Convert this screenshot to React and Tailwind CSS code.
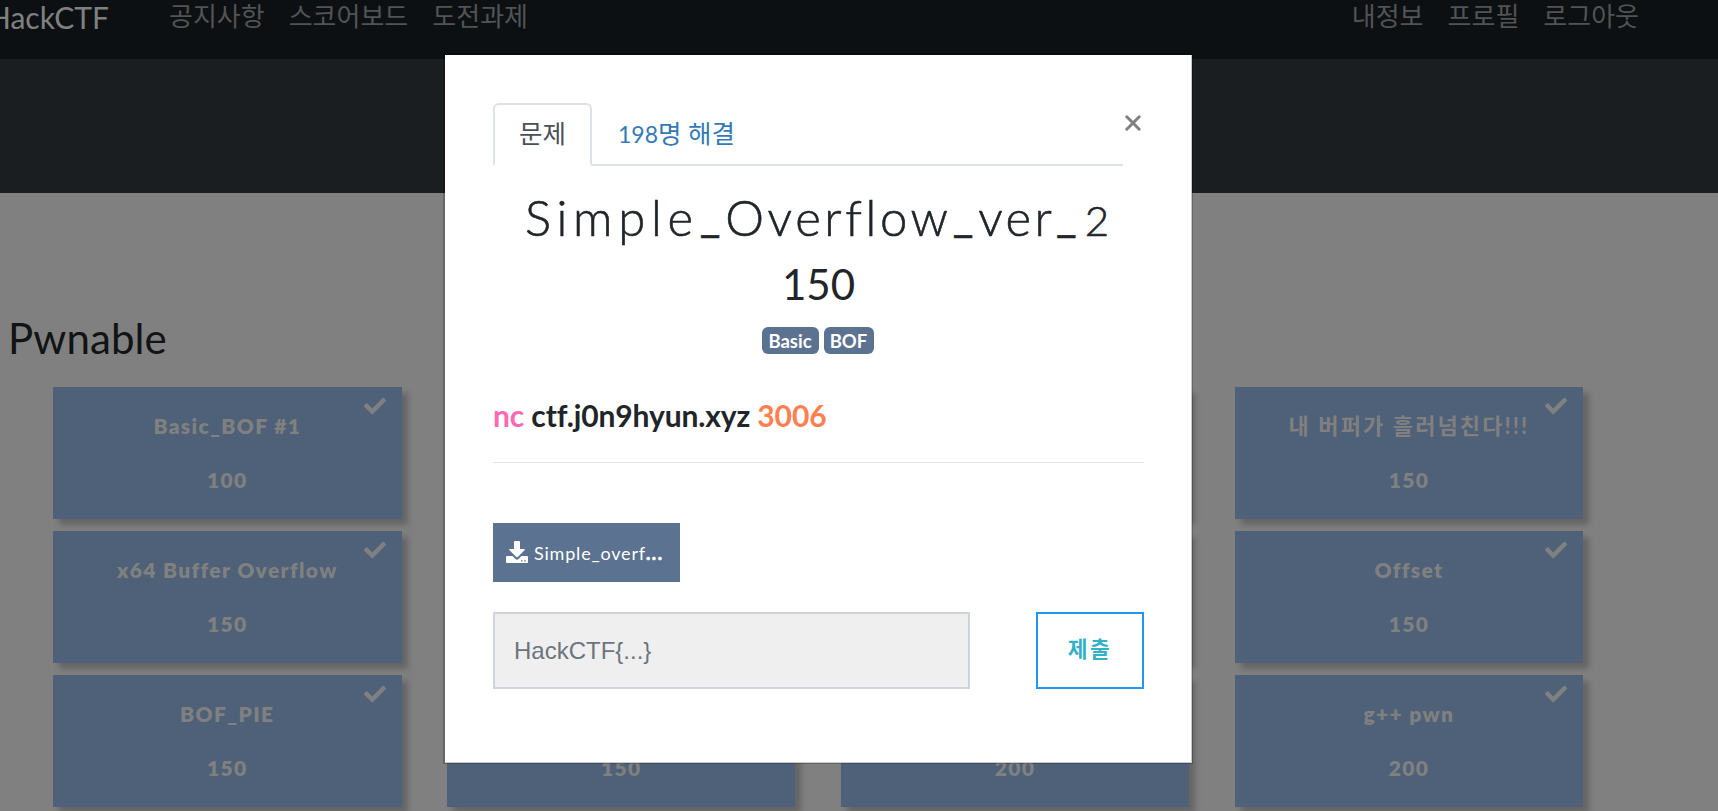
import { FaCheck } from "react-icons/fa";

const challenges = [
  ["Basic_BOF #1", 100], ["Basic_BOF #2", 100], ["Basic_FSB", 150], ["내 버퍼가 흘러넘친다!!!", 150],
  ["x64 Buffer Overflow", 150], ["x64 Simple_size_BOF", 150], ["Simple_Overflow_ver_2", 150], ["Offset", 150],
  ["BOF_PIE", 150], ["Yes or no", 150], ["RTL_World", 200], ["g++ pwn", 200],
];

function NavLinks({ items }) {
  return (
    <div className="mt-px flex gap-6 text-[26px] leading-[30px] text-[#515354]">
      {items.map((t) => <span key={t}>{t}</span>)}
    </div>
  );
}

function Card({ title, points }) {
  const korean = /[가-힣]/.test(title);
  return (
    <div className="relative h-[132px] w-[348.6px] bg-[#4e6178] pt-[22px] text-center text-[21px] font-extrabold leading-[33px] tracking-[1.35px] text-[#808080] shadow-[6px_6px_6px_rgba(0,0,0,0.22)]">
      <p className={korean ? "text-[22px] font-bold tracking-[2.1px]" : ""}>{title}</p>
      <p className="mt-[21px]">{points}</p>
      <FaCheck className="absolute right-[16px] top-[8px] size-[22px]" />
    </div>
  );
}

function Underscore() {
  return <span className="ml-[1px] mr-[5px] -translate-y-[4px] text-[45px] font-normal">_</span>;
}

function Modal() {
  return (
    <div className="absolute left-[443px] top-[53px] h-[711px] w-[750px] border-b border-l-2 border-r border-t-2 border-black/20 bg-white bg-clip-padding">
      <div className="h-full border-b border-r border-[#c9c9c9] pl-12 pr-[47px] pt-12">
        <div className="flex h-[63px]">
          <div className="flex w-[630px] border-b-2 border-[#dee2e6] leading-[36px]">
            <div className="mb-[-2px] h-[63px] w-[99px] rounded-t-[6px] border-2 border-[#dee2e6] border-b-white bg-white pt-[10px] text-center text-[25.5px] text-[#495057]">문제</div>
            <div className="pl-[26px] pt-[12px] text-[23px] text-[#337ab7]">198<span className="text-[25.5px]">명 해결</span></div>
          </div>
          <svg viewBox="0 0 16 16" className="ml-[2px] mt-[12px] size-4 text-[#808080]"><path d="M1.8 1.8 14.2 14.2M14.2 1.8 1.8 14.2" stroke="currentColor" strokeWidth="3" strokeLinecap="round" /></svg>
        </div>
        <h1 className="mr-[3px] mt-[22px] flex h-[58px] items-baseline justify-center whitespace-nowrap text-[49px] font-light leading-[58px] text-[#212529] [-webkit-text-stroke:0.6px_#212529]">
          <span className="tracking-[5.7px]">Simple</span>
          <Underscore />
          <span className="tracking-[3.6px]">Overflow</span>
          <Underscore />
          <span className="tracking-[3.3px]">ver</span>
          <Underscore />
          <span className="ml-[3px] text-[42px]">2</span>
        </h1>
        <h2 className="mt-[13px] text-center text-[42px] leading-[50px]">150</h2>
        <div className="mr-[2px] mt-[18px] flex h-[27px] justify-center gap-[5px] text-[18.5px] font-bold leading-[28px] text-white">
          <span className="h-[27px] w-[57px] rounded-[6px] bg-[#5b7290] text-center">Basic</span>
          <span className="h-[27px] w-[50px] rounded-[6px] bg-[#5b7290] text-center">BOF</span>
        </div>
        <p className="mt-[43px] whitespace-nowrap text-[30px] font-bold leading-[36px] tracking-[-0.12px] [font-variant-ligatures:none]">
          <span className="text-[#ff69b4]">nc</span> ctf.j0n9hyun.xyz <span className="text-[#ff7f50]">3006</span>
        </p>
        <hr className="mt-[29px] border-[#e5e5e5]" />
        <div className="mt-[60px] flex h-[59px] w-[187px] items-center bg-[#5b7290] pl-[13px] text-[18px] tracking-[0.8px] text-white">
          <svg viewBox="0 0 22 22" className="mr-[6px] size-[22px] -translate-y-px" fill="currentColor"><path d="M8 1q0-1 1-1h4q1 0 1 1v7h4.200q1.200 0 .5 1L11.700 16q-.7.700-1.400 0L3.300 9q-.7-1 .5-1H8z" /><path fillRule="evenodd" d="M1 15h5.500l3 3q1.500 1.300 3 0l3-3H21q1 0 1 1v5q0 1-1 1H1q-1 0-1-1v-5q0-1 1-1zM15 19.200h1.500v1.300H15zm3.200 0h1.500v1.300h-1.500z" /></svg>
          <span className="pt-[2px]">Simple_overf<b className="font-black tracking-[1.6px] [-webkit-text-stroke:0.6px_white]">...</b></span>
        </div>
        <div className="mt-[30px] flex justify-between">
          <input placeholder="HackCTF{...}" className="h-[77px] w-[477px] border-2 border-[#ced4da] bg-[#efefef] px-[19px] font-['Liberation_Sans',sans-serif] text-[24px] placeholder:text-[#6c757d]" />
          <button className="h-[77px] w-[108px] border-2 border-[#2196f3] pb-[2px] text-[21.5px] font-bold tracking-[2.5px] text-[#33b1c6]">제출</button>
        </div>
      </div>
    </div>
  );
}

export default function App() {
  return (
    <div className="relative h-[811px] w-[1718px] overflow-hidden bg-[#808080] font-['Lato','Noto_Sans_CJK_KR',sans-serif] text-[#212529]">
      <nav className="flex h-[59px] items-start justify-between bg-[#0c1012] pr-[79px]">
        <div className="flex">
          <span className="ml-[-12px] mt-[-1px] w-[181px] text-[30px] leading-[36px] text-[#808080]">HackCTF</span>
          <NavLinks items={["공지사항", "스코어보드", "도전과제"]} />
        </div>
        <NavLinks items={["내정보", "프로필", "로그아웃"]} />
      </nav>
      <div className="h-[134px] bg-[#1a1e21]" />
      <h3 className="ml-[8px] mt-[120px] text-[42px] leading-[50px] tracking-[0.1px] text-[#111315]">Pwnable</h3>
      <div className="ml-[53px] mt-[24px] grid w-[1531px] grid-cols-[repeat(4,348.6px)] gap-x-[45.3px] gap-y-3">
        {challenges.map(([title, points]) => <Card key={title} title={title} points={points} />)}
      </div>
      <Modal />
    </div>
  );
}
